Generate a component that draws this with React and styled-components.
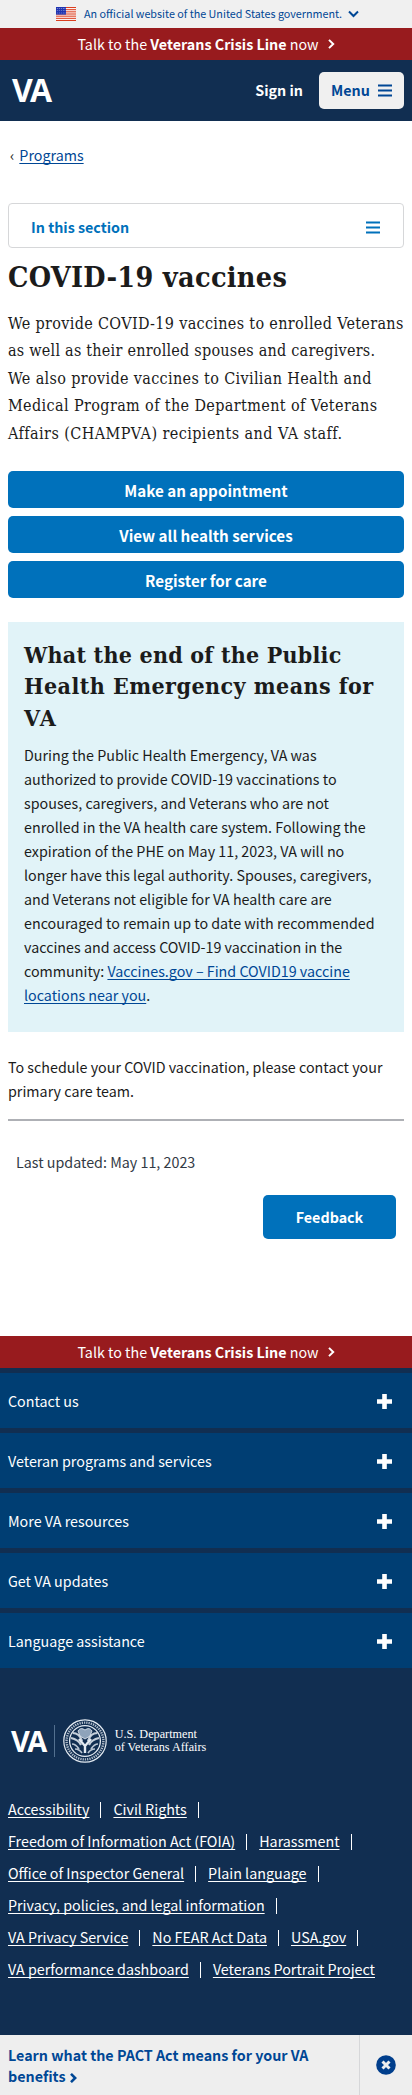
import React from "react";
import styled, { createGlobalStyle } from "styled-components";

const sans = '"Noto Sans CJK JP", "Noto Sans", sans-serif';
const slab = '"DejaVu Serif Condensed", "DejaVu Serif", serif';

const Global = createGlobalStyle`
  * { box-sizing: border-box; }
  body { margin: 0; background: #fff; color: #1b1b1b; font-family: ${sans}; font-size: 14.3px; line-height: 24px; }
  a { color: #004795; text-decoration: underline; text-underline-offset: 2px; text-decoration-thickness: 1px; text-decoration-skip-ink: none; }
  h1, h2, p, ul { margin: 0; padding: 0; }
  ul { list-style: none; }
  button { font: inherit; border: 0; margin: 0; padding: 0; background: none; }
  svg { display: block; flex: none; }
`;

const Page = styled.div`
  width: 412px;
  height: 2095px;
  overflow: hidden;
`;

const GovBanner = styled.div`
  height: 28px;
  padding-left: 56px;
  display: flex;
  align-items: center;
  background: #f0f0f0;
  color: #004795;
  font-size: 10.75px;
  span { margin: 0 6px 0 8px; white-space: nowrap; }
`;

const Crisis = styled.div`
  height: 32px;
  display: flex;
  align-items: center;
  justify-content: center;
  gap: 9px;
  background: #981b1e;
  color: #fff;
  white-space: nowrap;
`;

const Header = styled.header`
  height: 61px;
  padding: 0 8px 1px 12px;
  display: flex;
  align-items: center;
  background: #112e51;
  color: #fff;
`;

const SignIn = styled.button`
  margin-left: auto;
  margin-right: 16px;
  color: #fff;
  font-weight: 700;
`;

const MenuButton = styled.button`
  width: 85px;
  height: 37px;
  display: flex;
  align-items: center;
  justify-content: center;
  gap: 8px;
  border-radius: 5px;
  background: #f0f0f0;
  color: #004795;
  font-weight: 700;
`;

const Crumb = styled.nav`
  height: 82px;
  padding: 22px 0 0 10px;
  display: flex;
  gap: 5px;
`;

const Main = styled.main`
  height: 1133px;
  padding: 0 8px;
`;

const SectionNav = styled.button`
  width: 100%;
  height: 45px;
  padding: 3px 23px 0 22px;
  display: flex;
  align-items: center;
  justify-content: space-between;
  border: 1px solid #d6d7d9;
  border-radius: 4px;
  color: #0071bb;
  font-weight: 700;
`;

const Title = styled.h1`
  margin-top: 10px;
  font: 700 28.5px/39px ${slab};
  letter-spacing: 0.3px;
  white-space: nowrap;
`;

const Intro = styled.p`
  margin: 13px 0 24px;
  font: 400 16px/27.4px ${slab};
`;

const Line = styled.span`
  display: block;
  white-space: nowrap;
  letter-spacing: ${(p) => p.$track || 0}px;
`;

const Actions = styled.div`
  display: grid;
  gap: 8px;
`;

const Action = styled.button`
  height: 37px;
  border-radius: 5px;
  background: #0071bb;
  color: #fff;
  font-size: 15.2px;
  font-weight: 700;
`;

const Feature = styled.section`
  height: 410px;
  margin-top: 24px;
  padding: 17px 16px 0;
  background: #e1f3f8;
`;

const FeatureTitle = styled.h2`
  margin-bottom: 10px;
  font: 700 23px/31.4px ${slab};
`;

const Note = styled.p`
  margin-top: 23px;
  padding-bottom: 16px;
  border-bottom: 2px solid #aeb0b5;
`;

const Updated = styled.p`
  margin: 29px 0 21px 8px;
  color: #323a45;
`;

const Feedback = styled(Action)`
  display: block;
  width: 133px;
  height: 44px;
  margin: 0 8px 0 auto;
  font-size: 14.3px;
`;

const Accordion = styled.ul`
  height: 300px;
  background: #112e51;
`;

const Panel = styled.li`
  height: 60px;
  padding: 1px 20px 0 8px;
  display: flex;
  align-items: center;
  justify-content: space-between;
  border-top: 5px solid #112e51;
  background: #003e73;
  color: #fff;
`;

const Footer = styled.footer`
  height: 367px;
  padding: 0 8px;
  background: #112e51;
  color: #fff;
`;

const Brand = styled.div`
  height: 125px;
  padding: 20px 0 0 3px;
  display: flex;
  align-items: center;
`;

const Divider = styled.i`
  width: 1px;
  height: 32px;
  margin: 0 8px 0 9px;
  background: #53708f;
`;

const Department = styled.div`
  margin-left: 8px;
  font: 12.2px/12.6px "Liberation Serif", serif;
`;

const LinkRow = styled.div`
  height: 32px;
  display: flex;
  align-items: center;
  white-space: nowrap;
  a { color: #fff; }
`;

const Bar = styled.i`
  width: 1px;
  height: 16px;
  margin: 2px 12px 0 11px;
  background: #fff;
`;

const Promo = styled.aside`
  height: 60px;
  display: flex;
  background: #eee;
  color: #004795;
  font-weight: 700;
  line-height: 21.4px;
`;

const PromoText = styled.div`
  width: 360px;
  padding: 9px 8px 0;
  border-right: 1px solid #d6d7d9;
  svg { display: inline-block; margin-left: 4px; vertical-align: -1px; }
`;

const Close = styled.button`
  flex: 1;
  display: grid;
  place-items: center;
`;

const Flag = () => (
  <svg width="20" height="14" viewBox="0 0 20 14">
    <rect width="20" height="14" fill="#fff" />
    {[0, 2, 4, 6, 8, 10, 12].map((y) => <rect key={y} y={y * 1.077} width="20" height="1.077" fill="#db3e1f" />)}
    <rect width="10" height="7.6" fill="#1e33b1" />
    {[1.5, 3.7, 5.9].map((y) => [1.2, 3.2, 5.2, 7.2, 9].map((x) => <circle key={x + "-" + y} cx={x} cy={y} r=".4" fill="#fff" />))}
  </svg>
);

const Chevron = ({ w = 7, h = 10, sw = 2 }) => (
  <svg width={w} height={h} viewBox="0 0 7 10" fill="none" stroke="currentColor" strokeWidth={sw}><path d="M1 .9 5.2 5 1 9.1" /></svg>
);

const Burger = ({ w = 14 }) => (
  <svg width={w} height="13" viewBox="0 0 14 13" preserveAspectRatio="none" fill="currentColor">
    <path d="M0 .5h14v2H0zM0 5.5h14v2H0zM0 10.5h14v2H0z" />
  </svg>
);

const VaMark = styled.span`
  font: 700 ${(p) => p.$size}px/1 "Open Sans", sans-serif;
  letter-spacing: -0.09em;
`;

const Seal = () => (
  <svg width="44" height="44" viewBox="0 0 44 44" fill="none" stroke="#e4ebf2">
    <circle cx="22" cy="22" r="21.2" strokeWidth="1.2" />
    <circle cx="22" cy="22" r="18.4" strokeWidth="2.4" strokeDasharray="1.3 1" opacity=".75" />
    <circle cx="22" cy="22" r="15.4" strokeWidth="1.3" />
    <path d="M9.5 14c5 0 8 3 9.5 8M34.5 14c-5 0-8 3-9.5 8M8 19c5 1 8 3 10 7M36 19c-5 1-8 3-10 7" strokeWidth="2.2" opacity=".85" />
    <path d="M15 12c2-3 4-3 7-1 3-2 5-2 7 1l-2 5-5 3-5-3z" fill="#8ea3ba" strokeWidth=".8" />
    <path d="m16 20 6 7 6-7M22 26v8" strokeWidth="2.4" />
    <path d="M9 25c3 0 5 2 7 5M35 25c-3 0-5 2-7 5M12 30c3 0 5 1 7 4M32 30c-3 0-5 1-7 4" strokeWidth="1.7" opacity=".8" />
  </svg>
);

const CrisisLine = () => (
  <Crisis><span>Talk to the <b>Veterans Crisis Line</b> now</span><Chevron /></Crisis>
);

const panels = ["Contact us", "Veteran programs and services", "More VA resources", "Get VA updates", "Language assistance"];
const links = [
  ["Accessibility", "Civil Rights"],
  ["Freedom of Information Act (FOIA)", "Harassment"],
  ["Office of Inspector General", "Plain language"],
  ["Privacy, policies, and legal information"],
  ["VA Privacy Service", "No FEAR Act Data", "USA.gov"],
  ["VA performance dashboard", "Veterans Portrait Project"],
];

export default function App() {
  return (
    <Page>
      <Global />
      <GovBanner>
        <Flag />
        <span>An official website of the United States government.</span>
        <svg width="11" height="8" viewBox="0 0 11 8" fill="none" stroke="currentColor" strokeWidth="2"><path d="M1 1.5 5.5 6 10 1.5" /></svg>
      </GovBanner>
      <CrisisLine />
      <Header>
        <VaMark $size={32}>VA</VaMark>
        <SignIn>Sign in</SignIn>
        <MenuButton>Menu <Burger /></MenuButton>
      </Header>
      <Crumb><span>‹</span><a href="#programs">Programs</a></Crumb>
      <Main>
        <SectionNav>In this section <Burger /></SectionNav>
        <Title>COVID-19 vaccines</Title>
        <Intro>
          <Line $track={0.33}>We provide COVID-19 vaccines to enrolled Veterans</Line>
          <Line $track={0.24}>as well as their enrolled spouses and caregivers.</Line>
          <Line $track={0.35}>We also provide vaccines to Civilian Health and</Line>
          <Line $track={0.38}>Medical Program of the Department of Veterans</Line>
          <Line $track={0.43}>Affairs (CHAMPVA) recipients and VA staff.</Line>
        </Intro>
        <Actions>
          <Action>Make an appointment</Action>
          <Action>View all health services</Action>
          <Action>Register for care</Action>
        </Actions>
        <Feature>
          <FeatureTitle>
            <Line $track={0.23}>What the end of the Public</Line>
            <Line $track={0.45}>Health Emergency means for</Line>
            <Line $track={1.5}>VA</Line>
          </FeatureTitle>
          <p>
            <Line>During the Public Health Emergency, VA was</Line>
            <Line>authorized to provide COVID-19 vaccinations to</Line>
            <Line>spouses, caregivers, and Veterans who are not</Line>
            <Line>enrolled in the VA health care system. Following the</Line>
            <Line>expiration of the PHE on May 11, 2023, VA will no</Line>
            <Line>longer have this legal authority. Spouses, caregivers,</Line>
            <Line>and Veterans not eligible for VA health care are</Line>
            <Line>encouraged to remain up to date with recommended</Line>
            <Line>vaccines and access COVID-19 vaccination in the</Line>
            <Line>community: <a href="#vaccines">Vaccines.gov – Find COVID19 vaccine</a></Line>
            <Line><a href="#vaccines">locations near you</a>.</Line>
          </p>
        </Feature>
        <Note>
          <Line>To schedule your COVID vaccination, please contact your</Line>
          <Line>primary care team.</Line>
        </Note>
        <Updated>Last updated: May 11, 2023</Updated>
        <Feedback>Feedback</Feedback>
      </Main>
      <CrisisLine />
      <Accordion>
        {panels.map((t) => (
          <Panel key={t}>
            {t}
            <svg width="15" height="15" viewBox="0 0 15 15" fill="#fff"><path d="M5.2 0h4.6v5.2H15v4.6H9.8V15H5.2V9.8H0V5.2h5.2z" /></svg>
          </Panel>
        ))}
      </Accordion>
      <Footer>
        <Brand>
          <VaMark $size={29}>VA</VaMark>
          <Divider />
          <Seal />
          <Department><Line>U.S. Department</Line><Line>of Veterans Affairs</Line></Department>
        </Brand>
        {links.map((row, i) => (
          <LinkRow key={row[0]}>
            {row.map((t, j) => (
              <React.Fragment key={t}>
                <a href="#footer">{t}</a>
                {(i < links.length - 1 || j < row.length - 1) && <Bar />}
              </React.Fragment>
            ))}
          </LinkRow>
        ))}
      </Footer>
      <Promo>
        <PromoText><Line>Learn what the PACT Act means for your VA</Line><Line>benefits<Chevron w={7} h={10} sw={2.6} /></Line></PromoText>
        <Close aria-label="Close">
          <svg width="20" height="20" viewBox="0 0 20 20"><circle cx="10" cy="10" r="9.8" fill="#003e8c" /><path d="m6.5 6.5 7 7m0-7-7 7" stroke="#eee" strokeWidth="3" /></svg>
        </Close>
      </Promo>
    </Page>
  );
}
